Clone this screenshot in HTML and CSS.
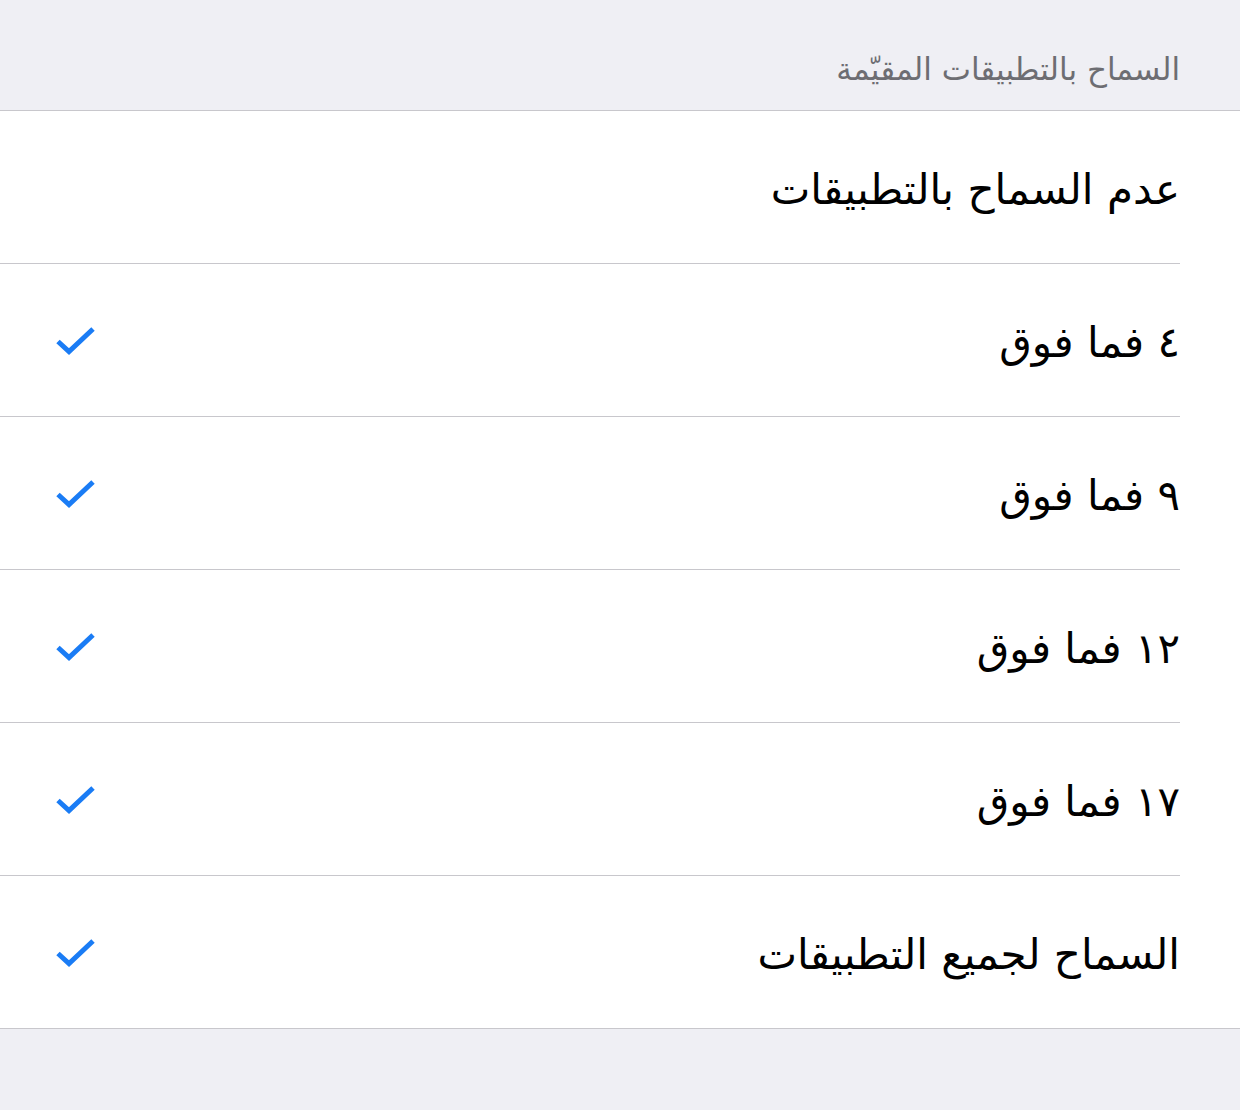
FILE: index.html
```html
<!DOCTYPE html>
<html lang="ar" dir="rtl">
<head>
<meta charset="utf-8">
<title>السماح بالتطبيقات المقيّمة</title>
<link rel="stylesheet" href="styles.css">
</head>
<body>
<div class="page">
  <div class="section-header">السماح بالتطبيقات المقيّمة</div>
  <div class="list">
    <div class="row"><div class="row-inner"><span class="label">عدم السماح بالتطبيقات</span></div></div>
    <div class="row"><div class="row-inner"><span class="label">٤ فما فوق</span><svg class="check" viewBox="0 0 40 30" width="40" height="30"><path d="M2 15.5 L13 25.5 L37 3" fill="none" stroke="#1a7cf5" stroke-width="5"/></svg></div></div>
    <div class="row"><div class="row-inner"><span class="label">٩ فما فوق</span><svg class="check" viewBox="0 0 40 30" width="40" height="30"><path d="M2 15.5 L13 25.5 L37 3" fill="none" stroke="#1a7cf5" stroke-width="5"/></svg></div></div>
    <div class="row"><div class="row-inner"><span class="label">١٢ فما فوق</span><svg class="check" viewBox="0 0 40 30" width="40" height="30"><path d="M2 15.5 L13 25.5 L37 3" fill="none" stroke="#1a7cf5" stroke-width="5"/></svg></div></div>
    <div class="row"><div class="row-inner"><span class="label">١٧ فما فوق</span><svg class="check" viewBox="0 0 40 30" width="40" height="30"><path d="M2 15.5 L13 25.5 L37 3" fill="none" stroke="#1a7cf5" stroke-width="5"/></svg></div></div>
    <div class="row"><div class="row-inner"><span class="label">السماح لجميع التطبيقات</span><svg class="check" viewBox="0 0 40 30" width="40" height="30"><path d="M2 15.5 L13 25.5 L37 3" fill="none" stroke="#1a7cf5" stroke-width="5"/></svg></div></div>
  </div>
</div>
</body>
</html>
```
FILE: styles.css
```css
html, body {
  margin: 0;
  padding: 0;
  background: #efeff4;
}
.page {
  font-family: "DejaVu Sans", sans-serif;
  width: 1240px;
  height: 1110px;
  background: #efeff4;
}
.section-header {
  height: 111px;
  box-sizing: border-box;
  padding: 46px 60px 0 0;
  font-size: 31px;
  line-height: 46px;
  color: #6d6d72;
  border-bottom: 1px solid #c8c7cc;
}
.list {
  background: #ffffff;
  border-bottom: 1px solid #c8c7cc;
}
.row {
  padding-right: 60px;
}
.row-inner {
  height: 152px;
  display: flex;
  align-items: center;
  justify-content: space-between;
  border-bottom: 1px solid #c8c7cc;
  padding-left: 56px;
}
.row:last-child .row-inner {
  border-bottom: none;
}
.label {
  font-size: 42px;
  color: #000;
  line-height: 1;
  padding-top: 6px;
}
.check {
  display: block;
  margin-top: 2px;
}
```
